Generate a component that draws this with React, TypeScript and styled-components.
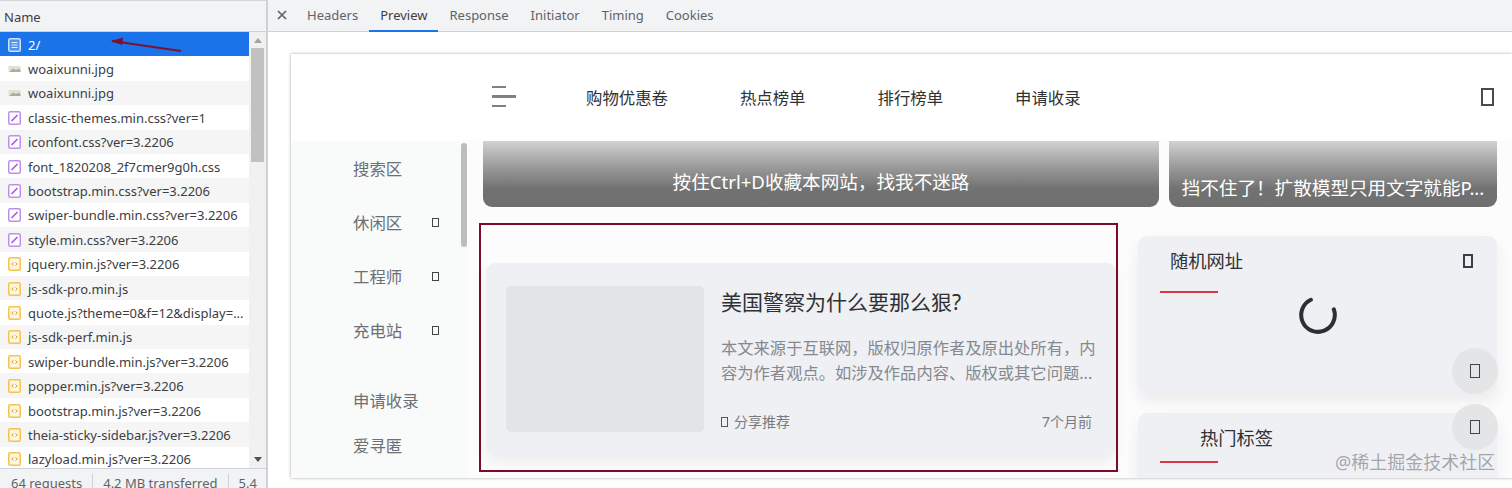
import styled, { createGlobalStyle } from "styled-components";

const GlobalStyle = createGlobalStyle`
  html, body {
    margin: 0;
    padding: 0;
    background: #fff;
    overflow: hidden;
  }
  * {
    box-sizing: border-box;
  }
`;

const Shell = styled.div`
  position: relative;
  display: flex;
  width: 1512px;
  height: 488px;
  overflow: hidden;
  font-family: "Noto Sans", "Noto Sans CJK SC", sans-serif;
`;

const NetworkPane = styled.aside`
  flex: none;
  display: flex;
  flex-direction: column;
  width: 268px;
  height: 488px;
  border-right: 2px solid #cfd1d4;
`;

const NameHeader = styled.div`
  flex: none;
  height: 32px;
  padding: 7px 0 0 4px;
  background: #f2f3f5;
  border-top: 1px solid #d4d5d7;
  border-bottom: 1px solid #cfd1d4;
  color: #3c4043;
  font-size: 13px;
  line-height: 18px;
`;

const ListArea = styled.div`
  flex: 1;
  display: flex;
  min-height: 0;
  overflow: hidden;
`;

const Requests = styled.ul`
  flex: none;
  width: 249px;
  margin: 0;
  padding: 0;
  list-style: none;
`;

const Request = styled.li<{ $selected?: boolean; $odd?: boolean }>`
  display: flex;
  align-items: center;
  gap: 7px;
  height: 24.4px;
  padding: 1px 0 0 8px;
  background: ${(p) => (p.$selected ? "#1a73e8" : p.$odd ? "#f5f5f5" : "#fff")};
  color: ${(p) => (p.$selected ? "#fff" : "#3c4043")};
  font-size: 13px;
  white-space: nowrap;
  overflow: hidden;
`;

const Scrollbar = styled.div`
  flex: 1;
  position: relative;
  display: flex;
  flex-direction: column;
  align-items: center;
  background: #f1f1f1;
  padding-top: 6px;
`;

const ArrowUp = styled.div`
  width: 0;
  height: 0;
  border-left: 4px solid transparent;
  border-right: 4px solid transparent;
  border-bottom: 5px solid #a3a3a3;
`;

const Thumb = styled.div`
  width: 13px;
  height: 114px;
  margin-top: 5px;
  background: #c1c1c1;
`;

const ArrowDown = styled.div`
  width: 0;
  height: 0;
  margin-top: auto;
  margin-bottom: 6px;
  border-left: 4px solid transparent;
  border-right: 4px solid transparent;
  border-top: 5px solid #505050;
`;

const StatusBar = styled.div`
  flex: none;
  display: flex;
  align-items: flex-start;
  height: 20px;
  padding: 5px 0 0 11px;
  background: #f2f3f5;
  border-top: 1px solid #cfd1d4;
  color: #5f6368;
  font-size: 13px;
  line-height: 18px;
  white-space: nowrap;
  overflow: hidden;
`;

const StatusItem = styled.span`
  padding-right: 10px;
  margin-right: 10px;
  border-right: 1px solid #cfd1d4;
  &:last-child {
    border-right: 0;
    margin-right: 0;
  }
`;

const PreviewPane = styled.main`
  flex: 1;
  min-width: 0;
  display: flex;
  flex-direction: column;
`;

const Tabs = styled.nav`
  flex: none;
  display: flex;
  height: 32px;
  padding-left: 9px;
  background: #f2f3f5;
  border-bottom: 1px solid #cfd1d4;
  color: #5f6368;
  font-size: 13px;
`;

const CloseTab = styled.div`
  display: flex;
  align-items: center;
  width: 19px;
  height: 30px;
`;

const Tab = styled.div<{ $active?: boolean }>`
  display: flex;
  align-items: center;
  height: 32px;
  padding: 0 11px;
  margin-bottom: -1px;
  border-bottom: 2px solid ${(p) => (p.$active ? "#1a73e8" : "transparent")};
  color: ${(p) => (p.$active ? "#3c4043" : "#5f6368")};
`;

const PreviewBody = styled.div`
  flex: 1;
  min-height: 0;
  padding: 22px 0 10px 23px;
`;

const SitePage = styled.div`
  display: flex;
  flex-direction: column;
  height: 100%;
  background: #fff;
  box-shadow: 0 0 3px rgba(0, 0, 0, 0.35);
  overflow: hidden;
`;

const TopBar = styled.header`
  flex: none;
  display: flex;
  align-items: center;
  height: 87px;
  padding: 0 18px 2px 201px;
  color: #303133;
  font-size: 16.4px;
`;

const Burger = styled.div`
  display: flex;
  flex-direction: column;
  gap: 7px;
  width: 24px;
  margin-right: 70px;
`;

const BurgerLine = styled.span<{ $w: number }>`
  display: block;
  height: 2.5px;
  width: ${(p) => p.$w}px;
  background: #808080;
`;

const TopLink = styled.span`
  margin-right: 72px;
`;

const TopTofu = styled.span`
  width: 13px;
  height: 18px;
  margin-left: auto;
  border: 2px solid #4a4a4a;
`;

const SiteBody = styled.div`
  flex: 1;
  min-height: 0;
  display: flex;
`;

const SideNav = styled.div`
  flex: none;
  position: relative;
  width: 176px;
  padding: 15px 0 0 62px;
  background: #f9fafa;
  color: #6b7075;
  font-size: 16.4px;
`;

const SideItem = styled.div<{ $gap: number }>`
  display: flex;
  align-items: center;
  height: 24px;
  margin-bottom: ${(p) => p.$gap}px;
`;

const SideTofu = styled.span`
  width: 7px;
  height: 9px;
  margin-left: 30px;
  border: 1.5px solid #444;
`;

const SideThumb = styled.div`
  position: absolute;
  top: 2px;
  right: 0;
  width: 6px;
  height: 104px;
  border-radius: 3px;
  background: #bdbdbd;
`;

const Content = styled.div`
  flex: 1;
  min-width: 0;
  padding-left: 16px;
  background: #fcfcfc;
`;

const Banners = styled.div`
  display: flex;
  gap: 10px;
  height: 66px;
`;

const Banner = styled.div<{ $w: number; $bottom: number }>`
  display: flex;
  align-items: flex-end;
  justify-content: center;
  flex: none;
  width: ${(p) => p.$w}px;
  padding-bottom: ${(p) => p.$bottom}px;
  border-radius: 0 0 9px 9px;
  background: linear-gradient(#d2d2d2 0%, #a0a0a0 35%, #727272 72%, #6f6f6f 100%);
  color: #fff;
  font-size: 18.6px;
  line-height: 24px;
  white-space: nowrap;
`;

const Columns = styled.div`
  display: flex;
  padding-top: 29px;
`;

const ArticleColumn = styled.div`
  flex: none;
  width: 630px;
  margin-left: 3px;
  padding-top: 27px;
`;

const ArticleCard = styled.article`
  display: flex;
  height: 192px;
  padding: 23px 24px 22px 20px;
  background: #eef0f4;
  border-radius: 9px;
  box-shadow: 0 8px 14px rgba(0, 0, 0, 0.06);
`;

const ThumbBlock = styled.div`
  flex: none;
  width: 198px;
  height: 146px;
  border-radius: 5px;
  background: #e3e4e6;
`;

const ArticleText = styled.div`
  flex: 1;
  min-width: 0;
  display: flex;
  flex-direction: column;
  margin-left: 17px;
`;

const ArticleTitle = styled.h2`
  margin: 0;
  color: #303133;
  font-size: 21px;
  font-weight: 400;
  line-height: 32px;
`;

const ArticleDesc = styled.p`
  width: 380px;
  margin: 18px 0 0;
  color: #85898e;
  font-size: 16.3px;
  line-height: 24.5px;
`;

const ArticleMeta = styled.div`
  display: flex;
  align-items: center;
  justify-content: space-between;
  margin-top: auto;
  padding-bottom: 2px;
  color: #777b80;
  font-size: 14px;
  line-height: 18px;
`;

const ShareLabel = styled.span`
  display: flex;
  align-items: center;
  gap: 6px;
`;

const MetaTofu = styled.span`
  width: 7px;
  height: 10px;
  border: 1.2px solid #555;
`;

const Aside = styled.div`
  flex: none;
  width: 359px;
  margin-left: 22px;
`;

const Widget = styled.section<{ $h: number; $gap: number }>`
  height: ${(p) => p.$h}px;
  margin-bottom: ${(p) => p.$gap}px;
  padding-left: 22px;
  background: #eef0f4;
  border-radius: 9px;
  box-shadow: 0 8px 16px rgba(0, 0, 0, 0.07);
`;

const WidgetHead = styled.div<{ $indent: number }>`
  display: flex;
  align-items: center;
  justify-content: space-between;
  height: 26px;
  padding: 0 24px 0 ${(p) => p.$indent}px;
  color: #303133;
  font-size: 18.3px;
  line-height: 26px;
`;

const WidgetTitleWrap = styled.div<{ $top: number }>`
  padding-top: ${(p) => p.$top}px;
`;

const HeadTofu = styled.span`
  width: 10px;
  height: 14px;
  border: 2px solid #3a3f45;
`;

const RedRule = styled.div<{ $top: number }>`
  width: 58px;
  height: 1.5px;
  margin-top: ${(p) => p.$top}px;
  background: #dc3545;
`;

const SpinnerWrap = styled.div`
  display: flex;
  justify-content: center;
  margin: 3px 0 0 -22px;
`;

const Annotation = styled.div`
  position: absolute;
  left: 479px;
  top: 223px;
  width: 639px;
  height: 249px;
  border: 2px solid #7d0a26;
  pointer-events: none;
`;

const FloatButton = styled.div<{ $top: number }>`
  position: absolute;
  top: ${(p) => p.$top}px;
  left: 1452px;
  display: flex;
  align-items: center;
  justify-content: center;
  width: 46px;
  height: 46px;
  border-radius: 50%;
  background: #e4e5e7;
`;

const FloatTofu = styled.span`
  width: 10px;
  height: 14px;
  border: 1.5px solid #444;
`;

const Watermark = styled.div`
  position: absolute;
  top: 450px;
  left: 1335px;
  color: rgba(110, 115, 120, 0.6);
  font-size: 18px;
  line-height: 24px;
  white-space: nowrap;
`;

const ArrowSvg = styled.svg`
  position: absolute;
  left: 108px;
  top: 36px;
`;

type Kind = "doc" | "img" | "css" | "js";

function FileIcon({ kind }: { kind: Kind }) {
  if (kind === "doc") {
    return (
      <svg width="13" height="14" viewBox="0 0 13 14" style={{ flex: "none" }}>
        <rect x="0.75" y="0.75" width="11.5" height="12.5" rx="1.5" fill="#4d94f0" stroke="#cfe2fb" strokeWidth="1.5" />
        <path d="M3.5 4.5h6M3.5 7h6M3.5 9.5h6" stroke="#e8f1fd" strokeWidth="1" />
      </svg>
    );
  }
  if (kind === "img") {
    return (
      <svg width="13" height="14" viewBox="0 0 13 14" style={{ flex: "none" }}>
        <rect x="0.5" y="4" width="12" height="6" fill="#dfe1d8" />
        <path d="M1 10 5 6.5l3 1.5 3-1.5 1.5 1.5v2z" fill="#a9b097" />
      </svg>
    );
  }
  if (kind === "css") {
    return (
      <svg width="13" height="14" viewBox="0 0 13 14" style={{ flex: "none" }}>
        <rect x="0.75" y="0.75" width="11.5" height="12.5" rx="1.5" fill="#fff" stroke="#c08fec" strokeWidth="1.5" />
        <path d="M3.5 10 9.5 4" stroke="#a457e0" strokeWidth="1.6" />
      </svg>
    );
  }
  return (
    <svg width="13" height="14" viewBox="0 0 13 14" style={{ flex: "none" }}>
      <rect x="0.75" y="0.75" width="11.5" height="12.5" rx="1.5" fill="#fff6dd" stroke="#f4c350" strokeWidth="1.5" />
      <path d="M5.5 5.5 3.8 7l1.7 1.5M7.5 5.5 9.2 7 7.5 8.5" fill="none" stroke="#c99a2e" strokeWidth="0.9" />
    </svg>
  );
}

const files: { name: string; kind: Kind }[] = [
  { name: "2/", kind: "doc" },
  { name: "woaixunni.jpg", kind: "img" },
  { name: "woaixunni.jpg", kind: "img" },
  { name: "classic-themes.min.css?ver=1", kind: "css" },
  { name: "iconfont.css?ver=3.2206", kind: "css" },
  { name: "font_1820208_2f7cmer9g0h.css", kind: "css" },
  { name: "bootstrap.min.css?ver=3.2206", kind: "css" },
  { name: "swiper-bundle.min.css?ver=3.2206", kind: "css" },
  { name: "style.min.css?ver=3.2206", kind: "css" },
  { name: "jquery.min.js?ver=3.2206", kind: "js" },
  { name: "js-sdk-pro.min.js", kind: "js" },
  { name: "quote.js?theme=0&f=12&display=...", kind: "js" },
  { name: "js-sdk-perf.min.js", kind: "js" },
  { name: "swiper-bundle.min.js?ver=3.2206", kind: "js" },
  { name: "popper.min.js?ver=3.2206", kind: "js" },
  { name: "bootstrap.min.js?ver=3.2206", kind: "js" },
  { name: "theia-sticky-sidebar.js?ver=3.2206", kind: "js" },
  { name: "lazyload.min.js?ver=3.2206", kind: "js" },
];

const tabs = ["Headers", "Preview", "Response", "Initiator", "Timing", "Cookies"];
const topLinks = ["购物优惠卷", "热点榜单", "排行榜单", "申请收录"];
const sideItems = [
  { label: "搜索区", gap: 30, tofu: false },
  { label: "休闲区", gap: 30, tofu: true },
  { label: "工程师", gap: 30, tofu: true },
  { label: "充电站", gap: 46, tofu: true },
  { label: "申请收录", gap: 21, tofu: false },
  { label: "爱寻匿", gap: 0, tofu: false },
];

function App() {
  return (
    <Shell>
      <GlobalStyle />
      <NetworkPane>
        <NameHeader>Name</NameHeader>
        <ListArea>
          <Requests>
            {files.map((file, index) => (
              <Request key={index} $selected={index === 0} $odd={index % 2 === 0}>
                <FileIcon kind={file.kind} />
                {file.name}
              </Request>
            ))}
          </Requests>
          <Scrollbar>
            <ArrowUp />
            <Thumb />
            <ArrowDown />
          </Scrollbar>
        </ListArea>
        <StatusBar>
          <StatusItem>64 requests</StatusItem>
          <StatusItem>4.2 MB transferred</StatusItem>
          <StatusItem>5.4</StatusItem>
        </StatusBar>
      </NetworkPane>
      <PreviewPane>
        <Tabs>
          <CloseTab>
            <svg width="10" height="10" viewBox="0 0 10 10">
              <path d="M1 1l8 8M9 1l-8 8" stroke="#5f6368" strokeWidth="1.7" />
            </svg>
          </CloseTab>
          {tabs.map((tab) => (
            <Tab key={tab} $active={tab === "Preview"}>
              {tab}
            </Tab>
          ))}
        </Tabs>
        <PreviewBody>
          <SitePage>
            <TopBar>
              <Burger>
                <BurgerLine $w={14} />
                <BurgerLine $w={24} />
                <BurgerLine $w={14} />
              </Burger>
              {topLinks.map((link) => (
                <TopLink key={link}>{link}</TopLink>
              ))}
              <TopTofu />
            </TopBar>
            <SiteBody>
              <SideNav>
                {sideItems.map((item) => (
                  <SideItem key={item.label} $gap={item.gap}>
                    {item.label}
                    {item.tofu && <SideTofu />}
                  </SideItem>
                ))}
                <SideThumb />
              </SideNav>
              <Content>
                <Banners>
                  <Banner $w={676} $bottom={13}>按住Ctrl+D收藏本网站，找我不迷路</Banner>
                  <Banner $w={328} $bottom={7}>挡不住了！扩散模型只用文字就能P...</Banner>
                </Banners>
                <Columns>
                  <ArticleColumn>
                    <ArticleCard>
                      <ThumbBlock />
                      <ArticleText>
                        <ArticleTitle>美国警察为什么要那么狠?</ArticleTitle>
                        <ArticleDesc>
                          本文来源于互联网，版权归原作者及原出处所有，内容为作者观点。如涉及作品内容、版权或其它问题...
                        </ArticleDesc>
                        <ArticleMeta>
                          <ShareLabel>
                            <MetaTofu />
                            分享推荐
                          </ShareLabel>
                          <span>7个月前</span>
                        </ArticleMeta>
                      </ArticleText>
                    </ArticleCard>
                  </ArticleColumn>
                  <Aside>
                    <Widget $h={157} $gap={20}>
                      <WidgetTitleWrap $top={12}>
                        <WidgetHead $indent={10}>
                          随机网址
                          <HeadTofu />
                        </WidgetHead>
                      </WidgetTitleWrap>
                      <RedRule $top={17} />
                      <SpinnerWrap>
                        <svg width="38" height="38" viewBox="0 0 38 38">
                          <path
                            d="M11.9 3.8A16.8 16.8 0 1 0 34.8 13.3"
                            fill="none"
                            stroke="#2c2f33"
                            strokeWidth="4"
                            strokeLinecap="round"
                          />
                        </svg>
                      </SpinnerWrap>
                    </Widget>
                    <Widget $h={80} $gap={0}>
                      <WidgetTitleWrap $top={12}>
                        <WidgetHead $indent={40}>热门标签</WidgetHead>
                      </WidgetTitleWrap>
                      <RedRule $top={10} />
                    </Widget>
                  </Aside>
                </Columns>
              </Content>
            </SiteBody>
          </SitePage>
        </PreviewBody>
      </PreviewPane>
      <ArrowSvg width="76" height="20" viewBox="0 0 76 20">
        <path d="M4 5 73 15" stroke="#7d1230" strokeWidth="1.8" />
        <path d="M3 5 15 1.5 14 9z" fill="#7d1230" />
      </ArrowSvg>
      <Annotation />
      <FloatButton $top={348}>
        <FloatTofu />
      </FloatButton>
      <FloatButton $top={404}>
        <FloatTofu />
      </FloatButton>
      <Watermark>@稀土掘金技术社区</Watermark>
    </Shell>
  );
}

export default App;
